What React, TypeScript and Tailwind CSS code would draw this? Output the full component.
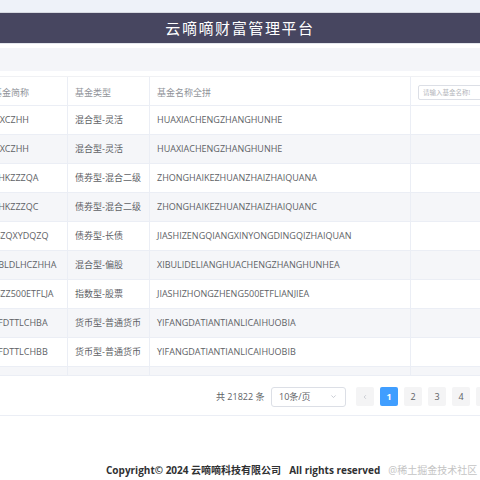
import { FC } from "react";

const rows = [
  { code: "HXCZHH", type: "混合型-灵活", pinyin: "HUAXIACHENGZHANGHUNHE" },
  { code: "HXCZHH", type: "混合型-灵活", pinyin: "HUAXIACHENGZHANGHUNHE" },
  { code: "ZHKZZZQA", type: "债券型-混合二级", pinyin: "ZHONGHAIKEZHUANZHAIZHAIQUANA" },
  { code: "ZHKZZZQC", type: "债券型-混合二级", pinyin: "ZHONGHAIKEZHUANZHAIZHAIQUANC" },
  { code: "JSZQXYDQZQ", type: "债券型-长债", pinyin: "JIASHIZENGQIANGXINYONGDINGQIZHAIQUAN" },
  { code: "XBLDLHCZHHA", type: "混合型-偏股", pinyin: "XIBULIDELIANGHUACHENGZHANGHUNHEA" },
  { code: "JSZZ500ETFLJA", type: "指数型-股票", pinyin: "JIASHIZHONGZHENG500ETFLIANJIEA" },
  { code: "YFDTTLCHBA", type: "货币型-普通货币", pinyin: "YIFANGDATIANTIANLICAIHUOBIA" },
  { code: "YFDTTLCHBB", type: "货币型-普通货币", pinyin: "YIFANGDATIANTIANLICAIHUOBIB" },
];

const font = { fontFamily: '"Open Sans", "Noto Sans CJK SC", sans-serif' };

const App: FC = () => {
  return (
    <div className="w-[480px] h-[480px] overflow-hidden bg-white" style={font}>
      {/* Header */}
      <div className="h-[13px] bg-[#eef2f9] border-b border-[#d6d9e0]" />
      <div className="h-[30px] bg-[#474660] flex items-center justify-center">
        <h1 className="text-white text-[15px] tracking-[1.6px] leading-none">云嘀嘀财富管理平台</h1>
      </div>
      <div className="h-[5px] bg-white border-t border-[#e3e6ec]" />
      <div className="h-[23px] bg-[#f4f5f9]" />
      <div className="h-[5px] bg-white" />

      {/* Table */}
      <div className="-ml-[13px] w-[520px] border-t border-[#f0f1f4]">
        <div className="flex h-[29px] border-b border-[#ebeef5] text-[9px] text-[#909399]">
          <div className="w-[81px] h-full flex items-center pt-[3px] pl-[6px] border-r border-[#ebeef5] whitespace-nowrap">基金简称</div>
          <div className="w-[82px] h-full flex items-center pt-[3px] pl-[7px] border-r border-[#ebeef5]">基金类型</div>
          <div className="w-[261px] h-full flex items-center pt-[3px] pl-[7px] border-r border-[#ebeef5]">基金名称全拼</div>
          <div className="flex-1 h-full flex items-center pt-[3px] pl-[7px]">
            <div className="w-[80px] h-[15px] border border-[#dcdfe6] rounded-[2px] flex items-center pl-[4px] text-[6.5px] text-[#b4b6bb] whitespace-nowrap">
              请输入基金名称!
            </div>
          </div>
        </div>
        {rows.map((r, i) => (
          <div
            key={i}
            className={`flex h-[29px] items-center border-b border-[#ebeef5] text-[9px] text-[#606266] ${
              i % 2 === 1 ? "bg-[#f5f6f9]" : "bg-white"
            }`}
          >
            <div className="w-[81px] h-full flex items-center pl-[6px] border-r border-[#ebeef5] whitespace-nowrap">{r.code}</div>
            <div className="w-[82px] h-full flex items-center pl-[7px] border-r border-[#ebeef5] whitespace-nowrap">{r.type}</div>
            <div className="w-[261px] h-full flex items-center pl-[7px] border-r border-[#ebeef5] whitespace-nowrap">{r.pinyin}</div>
            <div className="flex-1 h-full" />
          </div>
        ))}
        <div className="flex h-[9px] bg-[#f5f6f9] border-b border-[#ebeef5]">
          <div className="w-[81px] border-r border-[#ebeef5]" />
          <div className="w-[82px] border-r border-[#ebeef5]" />
          <div className="w-[261px] border-r border-[#ebeef5]" />
        </div>
      </div>

      {/* Pagination */}
      <div className="h-[40px] pt-[2px] border-b border-[#ebeef5] flex items-center pl-[216px] text-[9px] text-[#606266]">
        <span className="whitespace-nowrap w-[55px] shrink-0">共 21822 条</span>
        <div className="w-[75px] h-[20px] border border-[#dcdfe6] rounded-[3px] flex items-center justify-between pl-[7px] pr-[8px] shrink-0">
          <span>10条/页</span>
          <svg width="7" height="7" viewBox="0 0 10 10" fill="none" stroke="#c0c4cc" strokeWidth="1.2">
            <path d="M2 3.5 L5 6.5 L8 3.5" />
          </svg>
        </div>
        <div className="flex gap-[6px] ml-[10px] shrink-0">
          <div className="w-[18px] h-[19px] bg-[#f4f4f5] rounded-[2px] flex items-center justify-center">
            <svg width="6" height="6" viewBox="0 0 10 10" fill="none" stroke="#c0c4cc" strokeWidth="1.3">
              <path d="M6.5 2 L3.5 5 L6.5 8" />
            </svg>
          </div>
          <div className="w-[18px] h-[19px] bg-[#409eff] rounded-[2px] flex items-center justify-center text-white font-bold">1</div>
          {[2, 3, 4, 5].map((n) => (
            <div key={n} className="w-[18px] h-[19px] bg-[#f4f4f5] rounded-[2px] flex items-center justify-center">
              {n}
            </div>
          ))}
        </div>
      </div>

      {/* Footer */}
      <div className="h-[63px] flex items-end pb-[1px] pl-[106px] whitespace-nowrap text-[10px]">
        <span className="font-bold text-[#303133]">Copyright© 2024 云嘀嘀科技有限公司</span>
        <span className="font-bold text-[#303133] ml-[8px]">All rights reserved</span>
        <span className="text-[#c4c4c4] ml-[8px]">@稀土掘金技术社区</span>
      </div>
    </div>
  );
};

export default App;
